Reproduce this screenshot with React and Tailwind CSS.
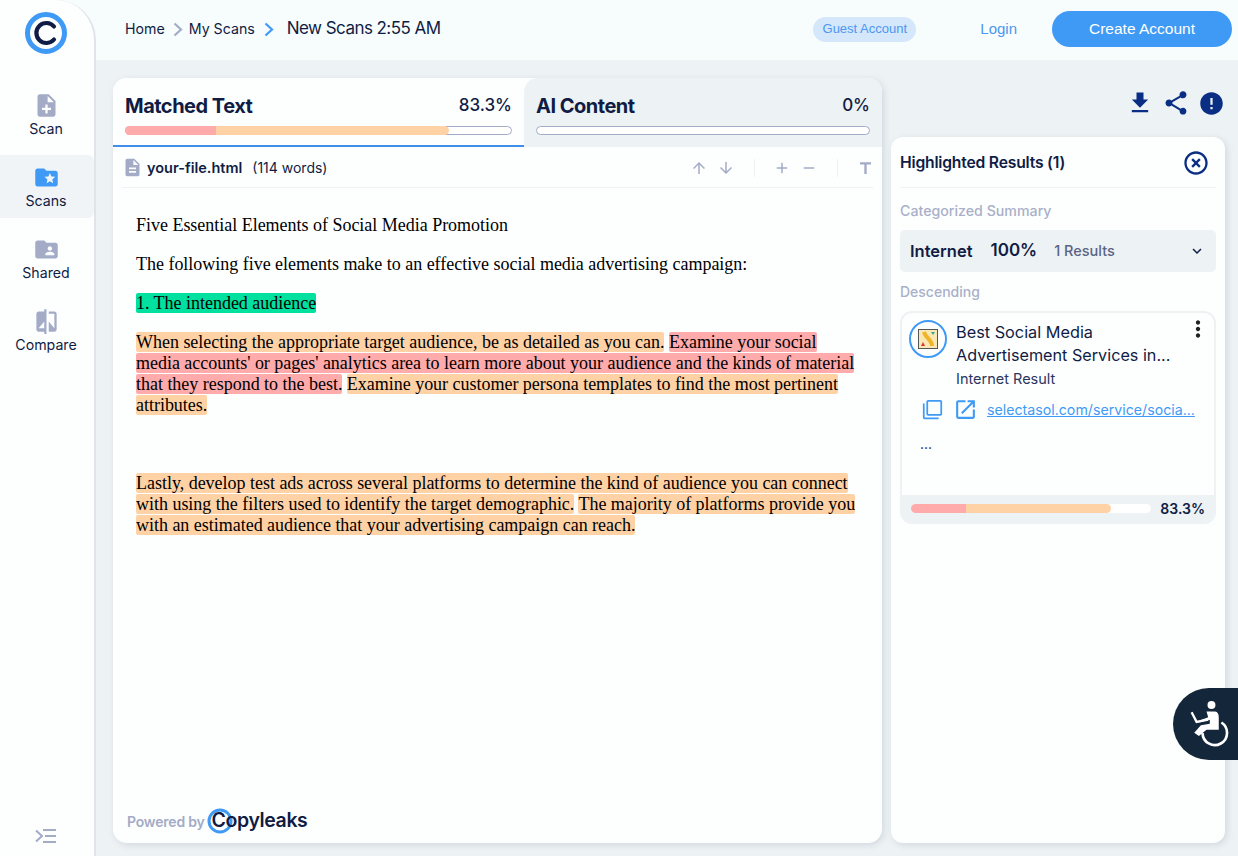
import React from 'react';
import {
  MdNoteAdd, MdFolderSpecial, MdFolderShared, MdCompare, MdDescription,
  MdArrowUpward, MdArrowDownward, MdAdd, MdRemove, MdTitle, MdFileDownload, MdShare, MdError,
  MdHighlightOff, MdKeyboardArrowDown, MdMoreVert, MdOutlineFilterNone, MdOpenInNew,
} from 'react-icons/md';

const navItems = [
  { label: 'Scan', icon: MdNoteAdd },
  { label: 'Scans', icon: MdFolderSpecial, active: true },
  { label: 'Shared', icon: MdFolderShared },
  { label: 'Compare', icon: MdCompare },
];

function Logo() {
  return (
    <svg width="44" height="44" viewBox="0 0 44 44" fill="none">
      <circle cx="22" cy="22" r="18.5" stroke="#3f9af5" strokeWidth="5" />
      <path d="M30 15.500a10 10 0 1 0 0 13" stroke="#101c44" strokeWidth="4.200" strokeLinecap="round" />
    </svg>
  );
}

function Crumb({ color }) {
  return (
    <svg width="10" height="15" viewBox="0 0 10 15" fill="none" stroke={color} strokeWidth="2.200" className="shrink-0">
      <path d="M1.500 1.500 8 7.500l-6.500 6" />
    </svg>
  );
}

function Sidebar() {
  return (
    <aside className="w-[96px] shrink-0 h-full bg-[#fdffff] border-r-2 border-[#dfe4e9] rounded-tr-[40px] flex flex-col">
      <div className="h-[83px] pl-[24px] pt-[11px]">
        <Logo />
      </div>
      <nav className="flex flex-col gap-[9px]">
        {navItems.map(({ label, icon: Icon, active }) => (
          <div key={label} className={active ? 'h-[63px] pr-[2px] flex flex-col items-center bg-[#f1f4f7] rounded-r-md' : 'h-[63px] pr-[2px] flex flex-col items-center'}>
            <Icon className={active ? 'mt-[9px] text-[#3f9af5]' : 'mt-[9px] text-[#a3abc6]'} size={27} />
            <span className="text-[14.200px] leading-[18px] mt-[1px] text-[#101c44]">{label}</span>
          </div>
        ))}
      </nav>
      <div className="mt-auto h-[28px] flex justify-center pr-[2px]">
        <svg width="22" height="16" viewBox="0 0 22 16" fill="none" stroke="#a3abc6" strokeWidth="2">
          <path d="M1 2.500 7 8l-6 5.500" />
          <path d="M8 2h13M10 8h11M8 14h13" />
        </svg>
      </div>
    </aside>
  );
}

function Header() {
  return (
    <header className="h-[60px] shrink-0 bg-[#f7fcfd] flex items-center pb-[2px] text-[#101c44]">
      <div className="flex items-center pl-[29px]">
        <span className="text-[14.200px]">Home</span>
        <span className="ml-[8px]"><Crumb color="#a3abc6" /></span>
        <span className="text-[14.200px] ml-[6px]">My Scans</span>
        <span className="ml-[9px]"><Crumb color="#3f9af5" /></span>
        <span className="text-[17px] ml-[13px] tracking-[-0.55px]">New Scans 2:55 AM</span>
      </div>
      <span className="ml-auto h-[25px] w-[103px] flex items-center justify-center rounded-full bg-[#d4e7fb] text-[#4d97ee] text-[13px] font-['Liberation_Sans',sans-serif]">Guest Account</span>
      <span className="ml-[64px] text-[#4d97ee] text-[15px] font-['Liberation_Sans',sans-serif]">Login</span>
      <button className="ml-[35px] mr-[6px] w-[180px] h-[36px] rounded-full bg-[#3f9af5] text-white text-[15.500px] font-['Liberation_Sans',sans-serif]">Create Account</button>
    </header>
  );
}

function TabBar({ pink, peach }) {
  return (
    <div className="mt-[6px] h-[9px] rounded-full border border-[#a3abc6] bg-white">
      <div className="-m-px h-[9px] flex rounded-full overflow-hidden">
        <div className="h-full bg-[#ffabab]" style={{ width: pink }} />
        <div className="h-full bg-[#ffd2a6] rounded-r-full" style={{ width: peach }} />
      </div>
    </div>
  );
}

function Tabs() {
  return (
    <div className="flex h-[69px] shrink-0">
      <div className="w-[411px] bg-[#fdffff] rounded-t-[14px] border-b-2 border-[#3f8fe8] px-[12px] pt-[14px]">
        <div className="flex justify-between items-center h-[28px] text-[#101c44]">
          <span className="text-[20px] font-bold tracking-[-0.5px]">Matched Text</span>
          <span className="text-[17px] font-medium">83.3%</span>
        </div>
        <TabBar pink={91} peach={233} />
      </div>
      <div className="flex-1 bg-[#edf2f4] rounded-t-[14px] pl-[12px] pr-[12px] pt-[14px]">
        <div className="flex justify-between items-center h-[28px] text-[#101c44]">
          <span className="text-[20px] font-bold tracking-[-0.5px]">AI Content</span>
          <span className="text-[17px] font-medium">0%</span>
        </div>
        <TabBar pink={0} peach={0} />
      </div>
    </div>
  );
}

function FileRow() {
  return (
    <div className="mx-[9px] h-[41px] shrink-0 border-b border-[#edf2f4] flex items-center text-[#101c44]">
      <MdDescription className="text-[#a3abc6]" size={21} />
      <span className="ml-[4px] mt-[1px] text-[14.500px] font-semibold">your-file.html</span>
      <span className="ml-[10px] text-[14px]">(114 words)</span>
      <div className="ml-auto flex items-center mt-[2px] text-[#a3abc6]">
        <MdArrowUpward size={18} />
        <MdArrowDownward size={18} className="ml-[9px]" />
        <div className="w-px h-[18px] bg-[#edf2f4] ml-[19px]" />
        <MdAdd size={18} className="ml-[18px]" />
        <MdRemove size={18} className="ml-[9px]" />
        <div className="w-px h-[18px] bg-[#edf2f4] ml-[19px]" />
        <MdTitle size={19} className="ml-[18px] mr-[-2px]" />
      </div>
    </div>
  );
}

function Mark({ tone, children }) {
  const tones = { green: 'bg-[#00e09e]', pink: 'bg-[#ffabab]', peach: 'bg-[#ffd2a6]' };
  return <span className={`${tones[tone]} rounded-[2px] [box-decoration-break:clone]`}>{children}</span>;
}

function Document() {
  return (
    <div className="flex-1 pl-[23px] pr-[22px] pt-[27px] font-['Liberation_Serif',serif] text-[18px] leading-[21px] tracking-[-0.02px] text-black flex flex-col gap-[18px]">
      <p>Five Essential Elements of Social Media Promotion</p>
      <p>The following five elements make to an effective social media advertising campaign:</p>
      <p><Mark tone="green">1. The intended audience</Mark></p>
      <p>
        <Mark tone="peach">When selecting the appropriate target audience, be as detailed as you can.</Mark>{' '}
        <Mark tone="pink">Examine your social media accounts' or pages' analytics area to learn more about your audience and the kinds of material that they respond to the best.</Mark>{' '}
        <Mark tone="peach">Examine your customer persona templates to find the most pertinent attributes.</Mark>
      </p>
      <p className="h-[21px]" />
      <p>
        <Mark tone="peach">Lastly, develop test ads across several platforms to determine the kind of audience you can connect with using the filters used to identify the target demographic.</Mark>{' '}
        <Mark tone="peach">The majority of platforms provide you with an estimated audience that your advertising campaign can reach.</Mark>
      </p>
    </div>
  );
}

function PoweredBy() {
  return (
    <div className="h-[46px] shrink-0 pl-[14px] pt-[2px] flex items-center">
      <span className="text-[14px] font-semibold text-[#a3abc6] tracking-[-0.2px]">Powered by</span>
      <svg width="26" height="26" viewBox="0 0 26 26" fill="none" className="ml-[2px] shrink-0">
        <circle cx="13" cy="13" r="11" stroke="#3f9af5" strokeWidth="3" />
      </svg>
      <span className="-ml-[21px] text-[19.500px] font-semibold text-[#101c44] tracking-[-0.4px]">Copyleaks</span>
    </div>
  );
}

function ResultCard() {
  return (
    <div className="mt-[10px] h-[213px] border-2 border-[#edf2f4] rounded-[12px] overflow-hidden flex flex-col text-[#101c44]">
      <div className="flex-1 relative">
        <div className="flex pl-[7px] pt-[7px]">
          <div className="w-[38px] h-[38px] rounded-full border-2 border-[#3f9af5] flex items-center justify-center shrink-0">
            <svg width="20" height="20" viewBox="0 0 20 20">
              <rect x="0.5" y="0.5" width="19" height="19" fill="#f9e7b5" stroke="#555" />
              <path d="M6 3c1 5 8 8 8 14" stroke="#f0b429" strokeWidth="4" fill="none" />
              <path d="M3 17l2-4 2 4z" fill="#d33" />
              <path d="M13 3h4l-2 3z" fill="#3a8" />
            </svg>
          </div>
          <div className="ml-[9px] pt-[1px] min-w-0 flex-1">
            <div className="text-[16.300px] leading-[23px]">Best Social Media</div>
            <div className="text-[16.200px] leading-[23px]">Advertisement Services in...</div>
            <div className="text-[14.500px] leading-[24px] text-[#2a3560]">Internet Result</div>
          </div>
          <MdMoreVert size={26} className="absolute right-[3px] top-[3px] text-[#222]" />
        </div>
        <div className="flex items-center pl-[20px] mt-[6px] text-[#3f9af5]">
          <MdOutlineFilterNone size={21} />
          <MdOpenInNew size={25} className="ml-[10px]" />
          <span className="ml-[9px] text-[14.200px] underline">selectasol.com/service/socia...</span>
        </div>
        <div className="pl-[18px] mt-[10px] text-[14px] leading-[24px]">...</div>
      </div>
      <div className="h-[27px] bg-[#edf2f4] flex items-center pl-[9px] pr-[9px]">
        <div className="w-[240px] h-[9px] rounded-full bg-white flex overflow-hidden">
          <div className="h-full bg-[#ffabab]" style={{ width: 55 }} />
          <div className="h-full bg-[#ffd2a6] rounded-r-full" style={{ width: 145 }} />
        </div>
        <span className="ml-auto text-[14px] font-semibold">83.3%</span>
      </div>
    </div>
  );
}

function ResultsPanel() {
  return (
    <div className="flex-1 bg-[#fdffff] rounded-[12px] shadow-[2px_2px_6px_rgba(160,170,190,0.35)] px-[9px] text-[#101c44]">
      <div className="h-[51px] pt-[2px] border-b border-[#edf2f4] flex items-center justify-between">
        <span className="text-[15.700px] font-semibold tracking-[-0.2px]">Highlighted Results (1)</span>
        <MdHighlightOff size={28} className="text-[#0b2e85] mr-[6px]" />
      </div>
      <div className="mt-[14px] text-[14.200px] leading-[18px] font-medium text-[#a9b0c8]">Categorized Summary</div>
      <div className="mt-[10px] h-[42px] bg-[#edf2f4] rounded-[5px] flex items-center pl-[10px] pr-[10px]">
        <span className="text-[16.500px] font-semibold">Internet</span>
        <span className="ml-[18px] text-[17px] font-semibold">100%</span>
        <span className="ml-[17px] text-[14.500px] font-medium text-[#5a6485]">1 Results</span>
        <MdKeyboardArrowDown size={18} className="ml-auto" />
      </div>
      <div className="mt-[11px] text-[14px] leading-[18px] font-medium text-[#a9b0c8]">Descending</div>
      <ResultCard />
    </div>
  );
}

function AccessibilityButton() {
  return (
    <button className="absolute right-0 top-[688px] w-[65px] h-[72px] bg-[#14273a] rounded-l-[36px] flex items-start pl-[15px] pt-[12px]">
      <svg width="42" height="48" viewBox="115 90 125 145" fill="none">
        <circle cx="185" cy="105" r="12" fill="#fff" />
        <path d="M170 125H196Q207 127 207 142V180H170L147 199 133 189 153 166 180 162V150L150 157H142L155 150 175 142Z" fill="#fff" />
        <path d="M125 127 140 156 175 149" stroke="#fff" strokeWidth="7" />
        <path d="M215 158A37 37 0 1 1 158 190" stroke="#fff" strokeWidth="8" />
      </svg>
    </button>
  );
}

export default function App() {
  return (
    <div className="relative w-[1238px] h-[856px] overflow-hidden flex bg-[#f7fcfd] font-['Inter',sans-serif]">
      <Sidebar />
      <main className="flex-1 min-w-0 flex flex-col">
        <Header />
        <div className="flex-1 min-h-0 bg-[#edf2f4] flex pl-[17px] pr-[13px] pt-[18px] pb-[13px] gap-[9px]">
          <section className="w-[769px] shrink-0 bg-[#fdffff] rounded-[14px] shadow-[2px_2px_6px_rgba(160,170,190,0.35)] flex flex-col">
            <Tabs />
            <FileRow />
            <Document />
            <PoweredBy />
          </section>
          <section className="flex-1 min-w-0 flex flex-col">
            <div className="h-[59px] shrink-0 flex items-center justify-end text-[#0b2e85] gap-[8px] pb-[9px]">
              <MdFileDownload size={28} />
              <MdShare size={28} />
              <MdError size={27} />
            </div>
            <ResultsPanel />
          </section>
        </div>
      </main>
      <AccessibilityButton />
    </div>
  );
}
